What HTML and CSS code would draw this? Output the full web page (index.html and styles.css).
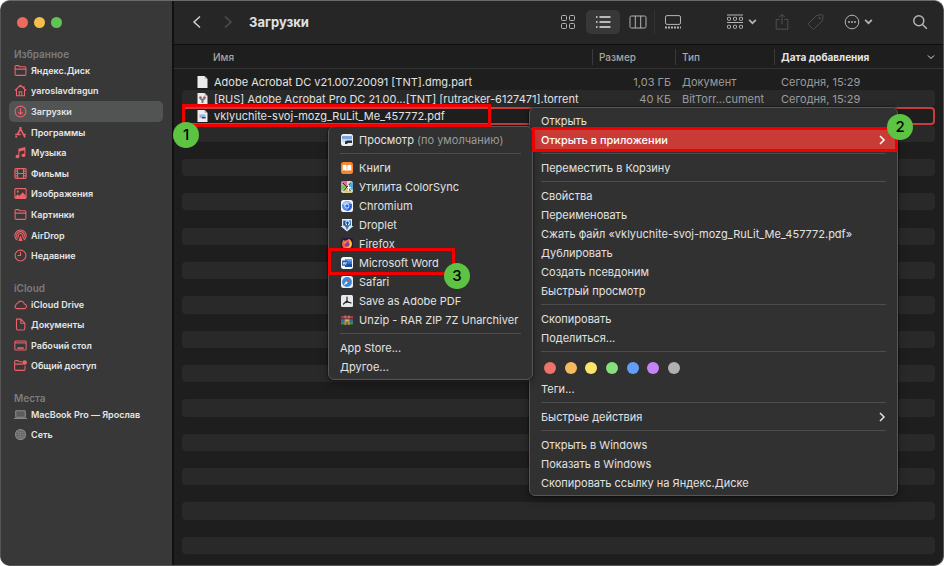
FILE: index.html
```html
<!DOCTYPE html>
<html lang="ru">
  <head>
    <meta charset="UTF-8" />
    <title>Загрузки</title>
    <link rel="stylesheet" href="styles.css" />
  </head>
  <body>
    <!-- Shared icons -->
    <svg class="sprite" aria-hidden="true">
      <symbol id="i-folder" viewBox="0 0 12 12">
        <path d="M1 3V2.5a1 1 0 0 1 1-1h2.2l1 1H10a1 1 0 0 1 1 1v6a1 1 0 0 1-1 1H2a1 1 0 0 1-1-1zM1 4.7h10" />
      </symbol>
      <symbol id="i-right" viewBox="0 0 8 10">
        <path d="M2 1l4 4-4 4" />
      </symbol>
      <symbol id="i-down" viewBox="0 0 8 8">
        <path d="M1 2.5l3 3 3-3" />
      </symbol>
    </svg>

    <div class="window">
      <!-- Sidebar -->
      <aside class="sidebar">
        <div class="lights">
          <button class="light red" aria-label="Закрыть"></button>
          <button class="light yellow" aria-label="Свернуть"></button>
          <button class="light green" aria-label="Развернуть"></button>
        </div>

        <h2>Избранное</h2>
        <ul class="favorites">
          <li><a href="#"><svg><use href="#i-folder" /></svg>Яндекс.Диск</a></li>
          <li><a href="#"><svg viewBox="0 0 12 12"><path d="M.8 6L6 1.2 11.200 6M2.300 5v5.800h7.400V5M4.800 10.800V7.200h2.400v3.600M9.200 3.800V1.800" /></svg>yaroslavdragun</a></li>
          <li><a href="#" class="active"><svg viewBox="0 0 12 12"><circle cx="6" cy="6" r="5" /><path d="M6 3v5.500M3.900 6.500L6 8.600l2.100-2.100" /></svg>Загрузки</a></li>
          <li><a href="#"><svg viewBox="0 0 12 12"><path class="bold" d="M6.800 1.200L3.300 7.500M5.200 1.200l5 9.300M1 7.800h5.300M8.500 7.800H11M2.400 9.200l-.8 1.400" /></svg>Программы</a></li>
          <li><a href="#"><svg viewBox="0 0 12 12"><path class="fill" d="M4 2.500L10.500 1v7.700a1.800 1.500 0 1 1-1-1.400V4L5 5v4.800a1.800 1.500 0 1 1-1-1.400z" /></svg>Музыка</a></li>
          <li><a href="#"><svg viewBox="0 0 12 12"><rect x=".8" y="1.500" width="10.400" height="9" rx="1" /><path d="M3.300 1.500v9M8.700 1.500v9M3.300 6h5.400M1 3.800h2M1 6h2M1 8.200h2M9 3.800h2M9 6h2M9 8.200h2" /></svg>Фильмы</a></li>
          <li><a href="#"><svg viewBox="0 0 12 12"><rect x=".8" y="1.500" width="10.400" height="9" rx="1" /><circle class="fill" cx="3.500" cy="4.300" r="1" /><path class="fill" d="M1 9l2.500-2.200L5 8l3-3.200L11 8v2.500H1z" /></svg>Изображения</a></li>
          <li><a href="#"><svg><use href="#i-folder" /></svg>Картинки</a></li>
          <li><a href="#"><svg viewBox="0 0 12 12"><path d="M3 10.300a5.200 5.200 0 1 1 6 0M3.700 8.800a3.600 3.600 0 1 1 4.600 0M4.600 7.600a2 2 0 1 1 2.800 0" /><path class="fill" d="M6 6l2 5H4z" /></svg>AirDrop</a></li>
          <li><a href="#"><svg viewBox="0 0 12 12"><circle cx="6" cy="6" r="5" /><path d="M6 2.800V6H3.300" /></svg>Недавние</a></li>
        </ul>

        <h2>iCloud</h2>
        <ul class="icloud">
          <li><a href="#"><svg viewBox="0 0 12 12"><path d="M2.800 9.800h6.400a2.100 2.100 0 0 0 .4-4.200 3.200 3.200 0 0 0-6-1 1.800 1.800 0 0 0-1.700 1.700 1.900 1.900 0 0 0 .9 3.500z" /></svg>iCloud Drive</a></li>
          <li><a href="#"><svg viewBox="0 0 12 12"><path d="M2.300 1h4l3.700 3.800V10a1 1 0 0 1-1 1H3.300a1 1 0 0 1-1-1zM6.300 1v3.800H10" /></svg>Документы</a></li>
          <li><a href="#"><svg viewBox="0 0 12 12"><rect x=".8" y="1.800" width="10.400" height="8.400" rx="1" /><path d="M1 3.600h10" /><path class="bold" d="M3 8.400h6" /></svg>Рабочий стол</a></li>
          <li><a href="#"><svg viewBox="0 0 12 12"><path d="M.6 3V2.500a1 1 0 0 1 1-1h2l1 1h3M.6 4.700h7.600M.6 3v6.500a1 1 0 0 0 1 1h7.600a1 1 0 0 0 1-1V6.200" /><circle class="fill" cx="9.800" cy="3.200" r="2.100" /></svg>Общий доступ</a></li>
        </ul>

        <h2>Места</h2>
        <ul class="places">
          <li><a href="#"><svg viewBox="0 0 12 12"><rect class="shade" x="1.600" y="2.500" width="8.800" height="6" rx=".6" /><path d="M0 9.600h12" /></svg>MacBook Pro — Ярослав</a></li>
          <li><a href="#"><svg viewBox="0 0 12 12"><circle class="shade" cx="6" cy="6" r="4.600" /><path class="thin" d="M1.200 6h9.600M6 1.200v9.600M2.200 3.300c2.300 1.400 5.300 1.400 7.600 0M2.200 8.700c2.300-1.400 5.300-1.400 7.600 0M6 1.200c-3 2.700-3 6.900 0 9.600M6 1.200c3 2.700 3 6.900 0 9.600" /></svg>Сеть</a></li>
        </ul>
      </aside>

      <main class="content">
        <!-- Toolbar -->
        <header class="toolbar">
          <button class="tool arrow" aria-label="Назад"><svg width="10" height="14" viewBox="0 0 10 14"><path d="M8 1.500L2 7l6 5.500" /></svg></button>
          <button class="tool arrow dim" aria-label="Вперед"><svg width="10" height="14" viewBox="0 0 10 14"><path d="M2 1.500L8 7l-6 5.500" /></svg></button>
          <h1>Загрузки</h1>

          <div class="views">
            <button class="tool" aria-label="Значки"><svg width="16" height="16" viewBox="0 0 16 16"><rect x="1.500" y="1.500" width="5" height="5" rx="1" /><rect x="9.500" y="1.500" width="5" height="5" rx="1" /><rect x="1.500" y="9.500" width="5" height="5" rx="1" /><rect x="9.500" y="9.500" width="5" height="5" rx="1" /></svg></button>
            <button class="tool pressed" aria-label="Список"><svg width="16" height="16" viewBox="0 0 16 16"><path d="M4.500 3h11M4.500 8h11M4.500 13h11M1 3h1.500M1 8h1.500M1 13h1.500" /></svg></button>
            <button class="tool split" aria-label="Колонки"><svg width="18" height="16" viewBox="0 0 18 16"><rect x="1" y="2" width="16" height="12" rx="1.500" /><path d="M6.300 2v12M11.700 2v12" /></svg></button>
            <button class="tool" aria-label="Галерея"><svg width="18" height="16" viewBox="0 0 18 16"><rect x="1.500" y="1.600" width="15" height="8.800" rx="1.500" /><path class="dots" d="M1 13.500h16" /></svg></button>
          </div>

          <button class="tool group" aria-label="Группировать">
            <svg width="18" height="18" viewBox="0 0 18 18"><path d="M1 2h16M1 9.500h16" /><rect x="1.500" y="4.300" width="3" height="3" rx=".7" /><rect x="7.500" y="4.300" width="3" height="3" rx=".7" /><rect x="13.500" y="4.300" width="3" height="3" rx=".7" /><rect x="1.500" y="12.300" width="3" height="3" rx=".7" /><rect x="7.500" y="12.300" width="3" height="3" rx=".7" /><rect x="13.500" y="12.300" width="3" height="3" rx=".7" /></svg>
            <svg class="caret"><use href="#i-down" /></svg>
          </button>
          <button class="tool small dim" aria-label="Поделиться"><svg width="16" height="18" viewBox="0 0 16 18"><path d="M5.500 6.500H2.200v9.700h11.600V6.500h-3.300M8 11V1.500M5 4.300l3-3 3 3" /></svg></button>
          <button class="tool small dim" aria-label="Теги"><svg width="18" height="18" viewBox="0 0 18 18"><path d="M1.800 10.200L9.700 2.500l5-.9c.9-.1 1.500.4 1.400 1.300l-.7 4.800-8 7.900c-.6.600-1.300.6-1.900 0l-3.700-3.600c-.5-.6-.5-1.200 0-1.800z" /><circle cx="12.700" cy="5" r=".8" /></svg></button>
          <button class="tool more" aria-label="Действия">
            <svg width="16" height="16" viewBox="0 0 16 16"><circle cx="8" cy="8" r="6.800" /><path class="thick" d="M4.300 8h1.400M7.300 8h1.400M10.300 8h1.400" /></svg>
            <svg class="caret"><use href="#i-down" /></svg>
          </button>
          <button class="tool small search" aria-label="Поиск"><svg width="16" height="16" viewBox="0 0 16 16"><circle cx="6.800" cy="6.800" r="5" /><path d="M10.500 10.500l4.300 4.300" /></svg></button>
        </header>

        <!-- File list -->
        <table class="files">
          <thead>
            <tr>
              <th>Имя</th>
              <th>Размер</th>
              <th>Тип</th>
              <th class="sorted">Дата добавления <svg><use href="#i-down" /></svg></th>
            </tr>
          </thead>
          <tbody id="file-rows">
            <tr>
              <td><svg viewBox="0 0 12 14"><path class="page" d="M1 1h7l3 3v9H1z" /><path class="fold" d="M8 1v3h3z" /></svg>Adobe Acrobat DC v21.007.20091 [TNT].dmg.part</td>
              <td>1,03 ГБ</td>
              <td>Документ</td>
              <td>Сегодня, 15:29</td>
            </tr>
            <tr>
              <td><svg viewBox="0 0 12 14"><path class="page" d="M1 1h7l3 3v9H1z" /><path class="fold" d="M8 1v3h3z" /><path fill="#777" d="M3 5h2v1.500h2V5h2v2L7 8.500V11H5V8.500L3 7z" /><path fill="#c33" d="M3 4.500h2V6H3zM7 4.500h2V6H7z" /></svg>[RUS] Adobe Acrobat Pro DC 21.00...[TNT] [rutracker-6127471].torrent</td>
              <td>40 КБ</td>
              <td>BitTorr...cument</td>
              <td>Сегодня, 15:29</td>
            </tr>
            <tr class="target">
              <td><svg viewBox="0 0 12 14"><path class="page" d="M1 1h7l3 3v9H1z" /><path class="fold" d="M8 1v3h3z" /><rect x="3" y="5.500" width="6" height="3.500" fill="#8fb4ea" /><path fill="#445" d="M5.500 8H9v1.500H5.500z" /></svg>vklyuchite-svoj-mozg_RuLit_Me_457772.pdf</td>
              <td></td>
              <td></td>
              <td></td>
            </tr>
          </tbody>
        </table>
      </main>

      <!-- Context menu -->
      <div class="menu context-menu">
        <button>Открыть</button>
        <button class="selected">Открыть в приложении<svg><use href="#i-right" /></svg></button>
        <hr />
        <button>Переместить в Корзину</button>
        <hr />
        <button>Свойства</button>
        <button>Переименовать</button>
        <button>Сжать файл «vklyuchite-svoj-mozg_RuLit_Me_457772.pdf»</button>
        <button>Дублировать</button>
        <button>Создать псевдоним</button>
        <button>Быстрый просмотр</button>
        <hr />
        <button>Скопировать</button>
        <button>Поделиться...</button>
        <hr />
        <div class="tags">
          <button class="tag-red" aria-label="Красный"></button>
          <button class="tag-orange" aria-label="Оранжевый"></button>
          <button class="tag-yellow" aria-label="Желтый"></button>
          <button class="tag-green" aria-label="Зеленый"></button>
          <button class="tag-blue" aria-label="Синий"></button>
          <button class="tag-purple" aria-label="Лиловый"></button>
          <button class="tag-gray" aria-label="Серый"></button>
        </div>
        <button>Теги...</button>
        <hr />
        <button>Быстрые действия<svg><use href="#i-right" /></svg></button>
        <hr />
        <button>Открыть в Windows</button>
        <button>Показать в Windows</button>
        <button>Скопировать ссылку на Яндекс.Диске</button>
      </div>

      <!-- Open with -->
      <div class="menu app-menu">
        <button>
          <svg viewBox="0 0 14 14"><rect x="1" y="1" width="12" height="12" rx="2.500" fill="#e9edf5" /><path fill="#7fa5df" d="M2 3h10v4H2z" /><path fill="#c6d9f4" d="M2 6h10v3H2z" /><path fill="#2b303c" d="M5 8.500l2-1h5V10H8l-1 1H5z" /></svg>
          Просмотр&nbsp;<span>(по умолчанию)</span>
        </button>
        <hr />
        <button>
          <svg viewBox="0 0 14 14"><rect x="1" y="1" width="12" height="12" rx="2.500" fill="#f5852b" /><path fill="#fff" d="M2.700 4.200C4.200 3.500 5.600 3.600 6.700 4.400v5.500c-1.100-.7-2.500-.8-4-.2zM11.300 4.200c-1.500-.7-2.900-.6-4 .2v5.500c1.100-.7 2.500-.8 4-.2z" /></svg>
          Книги
        </button>
        <button>
          <svg viewBox="0 0 14 14"><rect x="1" y="1" width="12" height="12" rx="2.500" fill="#d8dccf" /><path fill="#e36ba8" d="M7 7L1 3.500V2l1-1h5z" /><path fill="#7cc25b" d="M7 7L1 11V4z" /><path fill="#ecc94b" d="M7 7l5.500 5.500H4z" /><path fill="#57a8dd" d="M7 7l6-5v8z" /><path stroke="#2c2c2c" d="M3 3l7.500 8M11 2.500L3.500 11" /><path stroke="#fff" d="M8.500 5v6M7 7.500h4" /></svg>
          Утилита ColorSync
        </button>
        <button>
          <svg viewBox="0 0 14 14"><rect x="1" y="1" width="12" height="12" rx="2.500" fill="#f5f7fc" /><circle cx="7" cy="7" r="5" fill="#5b8def" /><path fill="#2e62d1" d="M7 4.500h4.300A5 5 0 0 1 7 12l2.200-4z" /><path fill="#a9c5fa" d="M2.800 4.400A5 5 0 0 1 11.300 4.600H7L5 8z" /><circle cx="7" cy="7" r="2.400" fill="#fff" /><circle cx="7" cy="7" r="1.800" fill="#2f6de0" /></svg>
          Chromium
        </button>
        <button>
          <svg viewBox="0 0 14 14"><path fill="#dce9f7" d="M2 1h10v7h1.500L7 13.500.5 8H2z" /><path fill="#3f79bd" d="M3 2.500h8v5H9.500L7 12 4.500 7.500H3z" /><circle cx="7.500" cy="4.800" r="2" fill="none" stroke="#f2f7fd" /><path stroke="#203d63" d="M4.800 3v4.500M7.500 4v3.500" /></svg>
          Droplet
        </button>
        <button>
          <svg viewBox="0 0 14 14"><rect x="1" y="1" width="12" height="12" rx="2.500" fill="#201b3d" /><path fill="#f5623a" d="M2.500 4.500l1-2 1 1.200L8 2.500l1-.7c1 1.200 3 2.700 3 5.400a5 5 0 0 1-10 .3c0-1.200.2-2 .5-3z" /><path fill="#ffc53c" d="M9 2c2.500 2 3.300 4 2.500 6.300-1 2.500-4 3.500-6.500 2.200 3.500.3 5.600-2 4.500-5z" /><circle cx="7" cy="7.300" r="2.200" fill="#7142c9" /><path fill="#ff8c2d" d="M3 5c1.200-.4 2.500.1 3.700.7L5.500 7z" /></svg>
          Firefox
        </button>
        <button>
          <svg viewBox="0 0 14 14"><rect x="1" y="1" width="12" height="12" rx="2.500" fill="#f7f9fc" /><path fill="#5ba7ec" d="M5 3h7v3H5z" /><path fill="#2e75cf" d="M5 5.500h7v3H5z" /><path fill="#1c4da0" d="M5 8h7v3H5z" /><rect x="2" y="4.500" width="5.500" height="5.300" rx=".6" fill="#2459b4" /><path stroke="#fff" stroke-width=".7" fill="none" d="M3 6l.8 2.500.9-2.300.9 2.300L6.500 6" /></svg>
          Microsoft Word
        </button>
        <button>
          <svg viewBox="0 0 14 14"><rect x="1" y="1" width="12" height="12" rx="2.500" fill="#e9edf1" /><circle cx="7" cy="7" r="4.900" fill="#358bdd" /><path fill="#f04d45" d="M10.500 3.500L7.800 7.800 6.200 6.200z" /><path fill="#fff" d="M3.500 10.500l2.700-4.300 1.600 1.600z" /></svg>
          Safari
        </button>
        <button>
          <svg viewBox="0 0 14 14"><rect x="1" y="1" width="12" height="12" rx="1.500" fill="#e7e8ea" /><path fill="none" stroke="#25282e" stroke-width="1.200" stroke-linecap="round" d="M7 3v3.700L3.500 10M7 6.700c.8 1.500 2 2.100 4 2.200M4.800 8.800c1.600-.7 3-.8 4.500-.4" /></svg>
          Save as Adobe PDF
        </button>
        <button>
          <svg viewBox="0 0 14 14"><path fill="#a73a55" d="M1 3h12v3H1z" /><path fill="#3d63b4" d="M1 6h12v2.500H1z" /><path fill="#3d8c4b" d="M1 8.500h12v3H1z" /><path fill="#b38748" d="M4.500 2.500h1.700v9.500H4.500zM8 2.500h1.700v9.500H8z" /><path fill="#d9b26c" d="M5.500 5.500h3.200v3H5.500z" /><path stroke="#5d2637" d="M1 5.800h12" /></svg>
          Unzip - RAR ZIP 7Z Unarchiver
        </button>
        <hr />
        <button>App Store...</button>
        <button>Другое...</button>
      </div>

      <!-- Step marks -->
      <div class="mark mark-file"></div>
      <div class="mark mark-open"></div>
      <div class="mark mark-word"></div>
      <div class="step step-1">1</div>
      <div class="step step-2">2</div>
      <div class="step step-3">3</div>
    </div>

    <script>
      // fill the rest of the list with empty striped rows
      const rows = document.getElementById("file-rows");
      while (rows.children.length < 28) {
        rows.appendChild(document.createElement("tr"));
      }
    </script>
  </body>
</html>
```
FILE: styles.css
```css
* {
  box-sizing: border-box;
}

body {
  margin: 0;
  background: #fff;
  color: #e2e2e2;
  font-family: Inter, "Liberation Sans", sans-serif;
  font-size: 11px;
}

button {
  margin: 0;
  padding: 0;
  border: 0;
  background: none;
  color: inherit;
  font: inherit;
}

svg {
  flex: none;
  fill: none;
  stroke: currentColor;
}

.sprite {
  display: none;
}

.window {
  position: relative;
  display: flex;
  height: 100vh;
  overflow: hidden;
  border: 1px solid #555;
  border-top-color: #6a6a6a;
  border-radius: 10px;
  background: #1e1e1e;
}

/* Sidebar */
.sidebar {
  width: 173px;
  flex: none;
  padding: 16px 9px 0 8px;
  background: #383838;
  border-right: 2px solid #111;
}

.lights {
  display: flex;
  gap: 6px;
  padding-left: 8px;
  height: 15px;
}

.light {
  width: 11px;
  height: 11px;
  border-radius: 50%;
}

.red {
  background: #ed6a5f;
}

.yellow {
  background: #f5bf4f;
}

.green {
  background: #61c555;
}

.sidebar h2 {
  margin: 0;
  padding: 16px 5px 0;
  font-size: 10px;
  line-height: 12px;
  font-weight: 600;
  color: #7c7c7c;
}

.sidebar ul {
  display: grid;
  grid-auto-rows: 1fr;
  margin: 0;
  padding: 0;
  list-style: none;
}

.favorites {
  height: 206px;
}

.icloud {
  height: 82px;
}

.places {
  height: 41px;
}

.sidebar a {
  display: flex;
  align-items: center;
  gap: 4px;
  height: 100%;
  padding-left: 5px;
  border-radius: 5px;
  color: #e6e6e6;
  font-size: 9px;
  font-weight: 600;
  text-decoration: none;
  white-space: nowrap;
}

.sidebar a.active {
  background: #525453;
}

.sidebar svg {
  width: 13px;
  height: 13px;
  color: #ea636b;
}

.sidebar .fill {
  fill: currentColor;
  stroke: none;
}

.sidebar .bold {
  stroke-width: 1.5;
}

.sidebar .places svg {
  color: #8b8b8b;
}

.places .shade {
  fill: #5c5c5c;
}

.places .thin {
  stroke-width: 0.5;
}

/* Toolbar */
.content {
  display: flex;
  flex-direction: column;
  flex: 1;
  min-width: 0;
}

.toolbar {
  display: flex;
  align-items: center;
  height: 44px;
  padding: 0 11px 2px;
  background: #262626;
  border-bottom: 1px solid #0e0e0e;
}

.toolbar h1 {
  flex: 1;
  margin: 0;
  font-size: 13px;
  font-weight: 700;
}

.tool {
  display: flex;
  align-items: center;
  justify-content: center;
  width: 34px;
  height: 24px;
  border-radius: 5px;
  color: #b4b4b4;
}

.tool .dots {
  stroke-width: 2;
  stroke-dasharray: 2 1;
}

.tool .thick {
  stroke-width: 2;
}

.arrow {
  width: 24px;
  margin-right: 7px;
  color: #d0d0d0;
}

.arrow svg {
  stroke-width: 1.5;
}

.arrow + .arrow {
  margin-right: 9px;
}

.views {
  display: flex;
  gap: 1px;
  margin-right: 36px;
}

.pressed {
  background: #383838;
  color: #e4e4e4;
}

.pressed svg {
  stroke-width: 1.5;
}

.split {
  border-radius: 0;
  border-right: 1px solid #333;
}

.small {
  width: 24px;
  margin-right: 10px;
}

.group,
.more {
  width: auto;
  gap: 4px;
}

.group {
  margin-right: 13px;
}

.more {
  margin-left: 6px;
  margin-right: 35px;
}

.caret {
  width: 9px;
  height: 9px;
  stroke-width: 1.5;
}

.search {
  margin-right: 0;
  stroke-width: 1.5;
}

.tool.dim {
  color: #505050;
}

/* File list */
.files {
  display: flex;
  flex-direction: column;
  flex: 1;
  white-space: nowrap;
}

.files tr {
  display: grid;
  grid-template-columns: 1fr 83px 99px 161px;
  align-items: center;
}

.files thead tr {
  height: 24px;
  padding: 0 8px;
  border-bottom: 1px solid #343434;
}

.files th {
  padding: 0 6px;
  border-left: 1px solid #3a3a3a;
  font-size: 10px;
  line-height: 16px;
  font-weight: 500;
  text-align: left;
  color: #a8a8a8;
}

.files th:first-child {
  padding-left: 31px;
  border: 0;
}

.files th.sorted {
  display: flex;
  align-items: center;
  justify-content: space-between;
  padding-right: 0;
  font-weight: 700;
  color: #e4e4e4;
}

.sorted svg {
  width: 8px;
  height: 8px;
}

.files tbody {
  flex: 1;
  display: grid;
  grid-auto-rows: 1fr;
  padding: 4px 8px 11px;
}

.files tbody tr {
  border-radius: 4px;
}

.files tbody tr:nth-child(even) {
  background: #292929;
}

.files tbody tr.target {
  box-shadow: inset 0 0 0 2px #c93c3c;
}

.files td {
  padding: 0 7px;
  line-height: 16px;
  color: #9c9c9c;
}

.files td:first-child {
  display: flex;
  align-items: center;
  gap: 5px;
  padding-left: 14px;
  color: #e2e2e2;
}

.files td:nth-child(2) {
  padding-right: 4px;
  text-align: right;
}

.files td svg {
  width: 13px;
  height: 14px;
  stroke: none;
}

.page {
  fill: #ececec;
}

.fold {
  fill: #bdbdbd;
}

/* Menus */
.menu {
  position: absolute;
  padding: 3px 0;
  border: 1px solid #565656;
  border-radius: 6px;
  background: #313131;
  box-shadow: 0 0 2px #000, 0 4px 10px rgba(0, 0, 0, 0.3);
}

.menu > button {
  display: flex;
  align-items: center;
  width: 100%;
  height: 19px;
  padding: 0 11px;
  white-space: nowrap;
}

.menu hr {
  height: 1px;
  margin: 4px 11px;
  border: 0;
  background: #4d4d4d;
}

.context-menu {
  top: 106px;
  left: 528px;
  width: 369px;
}

.context-menu > button {
  justify-content: space-between;
}

.context-menu svg {
  width: 8px;
  height: 10px;
  stroke-width: 1.5;
}

.menu > button.selected {
  background: #c93b37;
  color: #fff;
  font-weight: 500;
}

.tags {
  display: flex;
  align-items: center;
  justify-content: space-between;
  width: 150px;
  height: 23px;
  padding-left: 14px;
}

.tags button {
  width: 12px;
  height: 12px;
  border-radius: 50%;
}

.tag-red {
  background: #ee7368;
}

.tag-orange {
  background: #f4b961;
}

.tag-yellow {
  background: #fbe46b;
}

.tag-green {
  background: #84e07d;
}

.tag-blue {
  background: #649ef8;
}

.tag-purple {
  background: #c683f7;
}

.tag-gray {
  background: #b0b0b4;
}

.app-menu {
  top: 125px;
  left: 327px;
  width: 205px;
}

.app-menu svg {
  width: 14px;
  height: 14px;
  margin-right: 5px;
  stroke: none;
}

.app-menu span {
  color: #9a9a9a;
}

/* Step marks */
.mark {
  position: absolute;
  border: 3px solid #f00000;
}

.mark-file {
  top: 103px;
  left: 181px;
  width: 309px;
  height: 23px;
}

.mark-open {
  top: 126px;
  left: 531px;
  width: 366px;
  height: 25px;
}

.mark-word {
  top: 247px;
  left: 327px;
  width: 127px;
  height: 27px;
}

.step {
  position: absolute;
  width: 26px;
  height: 26px;
  border-radius: 50%;
  background: #5dc443;
  color: #000;
  font-size: 15px;
  line-height: 26px;
  font-weight: 500;
  text-align: center;
}

.step-1 {
  top: 121px;
  left: 172px;
}

.step-2 {
  top: 113px;
  left: 886px;
}

.step-3 {
  top: 262px;
  left: 443px;
}
```
